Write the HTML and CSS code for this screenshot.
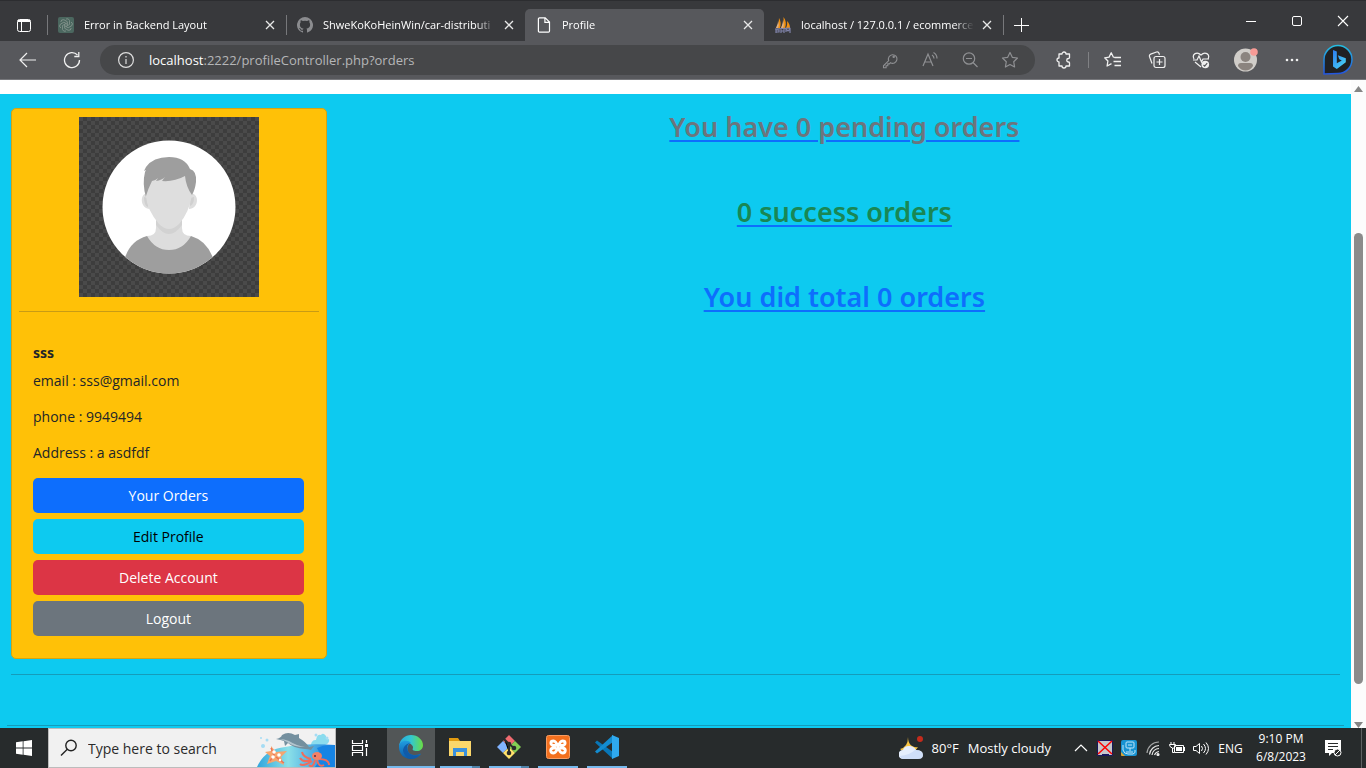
FILE: index.html
```html
<!DOCTYPE html>
<html lang="en">
<head>
<meta charset="utf-8">
<meta name="viewport" content="width=device-width, initial-scale=1">
<title>Profile</title>
<link rel="stylesheet" href="styles.css">
</head>
<body>
<svg class="defs" aria-hidden="true">
  <defs>
    <symbol id="x" viewBox="0 0 16 16"><path d="M4 4l8 8M12 4l-8 8" fill="none" stroke="#e8e8e8" stroke-width="1.3"/></symbol>
    <symbol id="github" viewBox="0 0 16 16"><path fill="#8b8c8f" d="M8 0a8 8 0 0 0-2.5 15.6c.4.1.5-.2.5-.4v-1.5c-2 .4-2.600-.5-2.800-1-.1-.2-.5-1-.8-1.200-.3-.2-.7-.5 0-.5s1.100.6 1.300.9c.7 1.200 1.900.9 2.300.7.1-.5.3-.9.500-1.100-1.800-.2-3.600-.9-3.600-4 0-.9.3-1.600.8-2.200-.1-.2-.4-1 .1-2.100 0 0 .7-.2 2.200.8a7.600 7.600 0 0 1 4 0c1.500-1 2.200-.8 2.200-.8.400 1.100.2 1.900.1 2.100.5.600.8 1.300.8 2.200 0 3.100-1.900 3.800-3.700 4 .3.300.6.7.6 1.500v2.200c0 .2.100.5.500.4A8 8 0 0 0 8 0z"/></symbol>
  </defs>
</svg>

<header class="browser">
  <div class="tabstrip">
    <button class="tab-actions" type="button" aria-label="Tab actions menu">
      <svg width="16" height="16" viewBox="0 0 16 16" fill="none" stroke="#fff"><rect x="1.500" y="2.500" width="13" height="12" rx="2"/><path d="M2 3.500h12M2 4.500h12M5.500 5v9"/></svg>
    </button>
    <div class="tab">
      <svg class="favicon" width="16" height="16" viewBox="0 0 16 16"><rect width="16" height="16" rx="2" fill="#4b675f"/><g fill="none" stroke="#87958f" stroke-width=".8"><path id="petal" d="M8 2a2.600 2.600 0 0 1 3.500 1.500v4L8 9.500"/><path d="M8 2a2.600 2.600 0 0 1 3.500 1.500v4L8 9.500" transform="rotate(60 8 8)"/><path d="M8 2a2.600 2.600 0 0 1 3.500 1.500v4L8 9.500" transform="rotate(120 8 8)"/><path d="M8 2a2.600 2.600 0 0 1 3.500 1.500v4L8 9.500" transform="rotate(180 8 8)"/><path d="M8 2a2.600 2.600 0 0 1 3.500 1.500v4L8 9.500" transform="rotate(240 8 8)"/><path d="M8 2a2.600 2.600 0 0 1 3.500 1.500v4L8 9.500" transform="rotate(300 8 8)"/></g></svg>
      <span class="tab-title">Error in Backend Layout</span>
      <button class="tab-close" type="button" aria-label="Close tab"><svg width="16" height="16"><use href="#x"/></svg></button>
    </div>
    <div class="tab">
      <svg class="favicon" width="16" height="16"><use href="#github"/></svg>
      <span class="tab-title">ShweKoKoHeinWin/car-distributi</span>
      <button class="tab-close" type="button" aria-label="Close tab"><svg width="16" height="16"><use href="#x"/></svg></button>
    </div>
    <div class="tab active">
      <svg class="favicon" width="16" height="16" viewBox="0 0 16 16" fill="none" stroke="#fff" stroke-width="1.200"><path d="M3.500.8h5.700l4.300 4.300v9a1.100 1.100 0 0 1-1.100 1.100H3.500a1.100 1.100 0 0 1-1.100-1.100V1.900A1.100 1.100 0 0 1 3.500.8zM8.900.8v4.500h4.500"/></svg>
      <span class="tab-title">Profile</span>
      <button class="tab-close" type="button" aria-label="Close tab"><svg width="16" height="16"><use href="#x"/></svg></button>
    </div>
    <div class="tab">
      <svg class="favicon" width="16" height="16" viewBox="0 0 16 16"><path fill="#f29111" d="M1 11C3 8 4 5 4 1c2 3 2 7 1 10zM6 11C8 7 9 4 8.500 0c2.500 3 3 7 1.500 11zM11 11c1-2 1.500-4 1-7 2 2 3 4 3 7z"/><path fill="#d9b089" d="M1 11c1-3 2-4 2-7 1 3 1 5 0 7zM6 11c1-3 2-5 2-8 1 3 1 6 0 8z"/><path fill="none" stroke="#7f82a8" stroke-width="1.200" d="M1 16v-3h3v2H1M6 16v-4M6 14h3m0-2v4M11 15v-3l2 2 2-2v4M0 12l15-1"/></svg>
      <span class="tab-title">localhost / 127.0.0.1 / ecommerce</span>
      <button class="tab-close" type="button" aria-label="Close tab"><svg width="16" height="16"><use href="#x"/></svg></button>
    </div>
    <button class="new-tab" type="button" aria-label="New tab"><svg width="16" height="16" viewBox="0 0 16 16" stroke="#fff"><path d="M8.500 1v14M1 8.500h15"/></svg></button>
    <div class="window-controls">
      <button type="button" aria-label="Minimize"><svg width="12" height="12" stroke="#fff"><path d="M1 6.500h10"/></svg></button>
      <button type="button" aria-label="Maximize"><svg width="12" height="12" fill="none" stroke="#fff"><rect x="1.500" y="1.500" width="9" height="9" rx="1.500"/></svg></button>
      <button type="button" aria-label="Close"><svg width="12" height="12" stroke="#fff" stroke-width="1.100"><path d="M1 1l10 10M11 1L1 11"/></svg></button>
    </div>
  </div>

  <div class="toolbar">
    <button class="tool" type="button" aria-label="Back"><svg width="18" height="18" viewBox="0 0 18 18" fill="none" stroke="#f0f0f0" stroke-width="1.200"><path d="M17 9H1.500M8 2L1 9l7 7"/></svg></button>
    <button class="tool" type="button" aria-label="Refresh"><svg width="18" height="18" viewBox="0 0 18 18" fill="none" stroke="#f0f0f0" stroke-width="1.300"><path d="M16.500 9A7.500 7.500 0 1 1 14.500 4M15.800 1v4.500h-4.500"/></svg></button>
    <div class="address">
      <svg width="18" height="18" viewBox="0 0 18 18" fill="none" stroke="#dedede" stroke-width="1.200"><circle cx="9" cy="9" r="7.400"/><path d="M9 8v5M9 5v1.500"/></svg>
      <a class="url" href="#"><b>localhost</b>:2222/profileController.php?orders</a>
      <div class="address-icons">
        <button type="button" aria-label="Saved passwords"><svg width="18" height="18" viewBox="0 0 18 18" fill="none" stroke="#8f9093" stroke-width="1.100"><path d="M7.700 9.600l-5.200 5.200v2h2.600v-2h1.700v-1.900h1.600l1.100-1.200a4.300 4.300 0 1 0-1.800-2.100z"/><circle cx="12.700" cy="5.700" r=".7"/></svg></button>
        <button type="button" aria-label="Read aloud"><svg width="18" height="18" viewBox="0 0 18 18" fill="none" stroke="#8f9093" stroke-width="1.200"><path d="M2 15L7 3l5 12M3.800 11h6.400M11 4q2 1.300 2 3.500M12.500 1.500q3.500 2 3.500 6"/></svg></button>
        <button type="button" aria-label="Zoom"><svg width="18" height="18" viewBox="0 0 18 18" fill="none" stroke="#8f9093" stroke-width="1.200"><circle cx="8" cy="7.500" r="5.700"/><path d="M5 7.500h6M12 11.500l4.500 4.500"/></svg></button>
        <button type="button" aria-label="Add to favorites"><svg width="18" height="18" viewBox="0 0 18 18" fill="none" stroke="#8f9093" stroke-width="1.200" stroke-linejoin="round"><path d="M9 1.500l2.300 4.800 5.200.7-3.800 3.700.9 5.300L9 13.500 4.400 16l.9-5.300L1.500 7l5.200-.7z"/></svg></button>
      </div>
    </div>
    <button class="tool" type="button" aria-label="Extensions"><svg width="18" height="18" viewBox="0 0 18 18" fill="none" stroke="#f0f0f0" stroke-width="1.300" stroke-linejoin="round"><path d="M4 3h3a2 2 0 0 1 4 0h3.500v3.800a1 1 0 0 1-1 .7 1.700 1.700 0 0 0 0 3.500 1 1 0 0 1 1 .8V15H11a2 2 0 0 1-4 0H4v-4a2 2 0 0 1 0-4z"/></svg></button>
    <span class="divider"></span>
    <button class="tool" type="button" aria-label="Favorites"><svg width="18" height="18" viewBox="0 0 18 18" fill="none" stroke="#f0f0f0" stroke-width="1.300" stroke-linejoin="round"><path d="M10.500 6.500L9.300 6 7.200 1.800 5.100 6.100l-4.400.7 3.200 3.200-.8 5L7.500 12.700M10.500 6.500H17M9.500 10.500H17M10.500 14.500H17"/></svg></button>
    <button class="tool" type="button" aria-label="Collections"><svg width="18" height="18" viewBox="0 0 18 18" fill="none" stroke="#f0f0f0" stroke-width="1.200"><rect x="6" y="5.500" width="11" height="11" rx="2"/><path d="M11.500 8v6M8.500 11h6M4 12.500l-2.500-7a2 2 0 0 1 1.200-2.400L8.500 1a2 2 0 0 1 2.500 1.200l.5 1.500"/></svg></button>
    <button class="tool" type="button" aria-label="Browser essentials"><svg width="18" height="18" viewBox="0 0 18 18" fill="none" stroke="#f0f0f0" stroke-width="1.200"><path d="M2 8C-.5 3 5 0 9 4c4-4 9.500-1 7 4M1 9h4l2-4 2.500 6L11 8h6M3 11l6 5"/><circle cx="13.300" cy="13.500" r="3.800" fill="#f0f0f0" stroke="none"/><path stroke="#57585c" d="M11.500 14l1.200 1.200 2.500-3"/></svg></button>
    <button class="tool wide" type="button" aria-label="Account"><svg width="24" height="26" viewBox="0 0 24 26"><circle cx="11.500" cy="13" r="11.500" fill="#d0cdc9"/><circle cx="11.500" cy="10" r="5" fill="#8b847f"/><path fill="#8b847f" d="M4 19q0-3 3-3h9q3 0 3 3-3 4.500-7.500 4.500T4 19z"/><circle cx="20" cy="5" r="3.800" fill="#f79b96"/></svg></button>
    <button class="tool wide" type="button" aria-label="Settings and more"><svg width="18" height="18" fill="#f0f0f0"><circle cx="4" cy="9" r="1.300"/><circle cx="9" cy="9" r="1.300"/><circle cx="14" cy="9" r="1.300"/></svg></button>
    <button class="tool wide" type="button" aria-label="Bing chat"><svg width="30" height="32" viewBox="0 0 30 32"><defs><linearGradient id="ring" x2="0" y2="1"><stop stop-color="#24bde0"/><stop offset="1" stop-color="#2355df"/></linearGradient><linearGradient id="b" x2="1" y2="1"><stop stop-color="#2d7cf3"/><stop offset="1" stop-color="#4bdcf5"/></linearGradient></defs><path d="M1 30V15.500A14 14 0 1 1 15 29.500z" fill="#202124" stroke="url(#ring)" stroke-width="1.500"/><path fill="url(#b)" d="M10 6l3.800 1.500v11.800l5-2.800-2.500-1.300-1.500-4 8 3v4L13.800 25 10 22.500z"/></svg></button>
  </div>
</header>

<div class="viewport">
  <main class="page">
    <div class="row">
      <aside class="sidebar">
        <section class="card">
          <svg class="avatar" width="180" height="180" viewBox="0 0 180 180" role="img" aria-label="Profile picture">
            <defs>
              <pattern id="checks" width="8" height="8" patternUnits="userSpaceOnUse"><rect width="8" height="8" fill="#3d3d3d"/><path d="M0 0h4v4H0zM4 4h4v4H4z" fill="#4a4a4a"/></pattern>
              <clipPath id="disc"><circle cx="90" cy="90" r="66.500"/></clipPath>
            </defs>
            <rect width="180" height="180" fill="url(#checks)"/>
            <g clip-path="url(#disc)">
              <rect width="180" height="180" fill="#fff"/>
              <path fill="#9e9e9e" d="M45 144q5-20 23-25h44q17 5 23 25v14H45z"/>
              <path fill="#dddddd" d="M77 98h26v13q0 8 9 8-8 14-22 14t-22-14q9 0 9-8z"/>
              <path fill="#d2d2d2" d="M77 103q13 14 26 0v5q-13 18-26 0z"/>
              <path fill="#dedede" d="M69 76c-9 0-8 16 2 16zM111 76c10 0 9 16-1 16z"/>
              <path fill="#d0d0d0" d="M65 80l4 1v9q-4-1-4-10zM115 80l-4 1v8q4-1 4-9z"/>
              <path fill="#dedede" d="M67 58q23-18 46 0v20q-3 18-13 29-10 10-20 0-12-14-13-28z"/>
              <path fill="#9e9e9e" d="M67 80q-4-13-1-25l1-2-2 1 2-4q7-10 23-10 16 0 21 12 7 2 6 13-1 8-4 13-6-8-7-19-11 6-23 5l3-4q-3 3-9 4l2-3q-3 3-6 3-4 8-6 15z"/>
            </g>
          </svg>
          <hr class="card-rule">
          <div class="card-body">
            <h1 class="name">sss</h1>
            <p>email : sss@gmail.com</p>
            <p>phone : 9949494</p>
            <p>Address : a asdfdf</p>
            <div class="actions">
              <button class="btn primary" type="button">Your Orders</button>
              <button class="btn info" type="button">Edit Profile</button>
              <button class="btn danger" type="button">Delete Account</button>
              <button class="btn secondary" type="button">Logout</button>
            </div>
          </div>
        </section>
      </aside>
      <section class="orders">
        <a href="#"><h2 class="pending">You have 0 pending orders</h2></a>
        <a href="#"><h2 class="success">0 success orders</h2></a>
        <a href="#"><h2 class="total">You did total 0 orders</h2></a>
      </section>
    </div>
    <hr class="rule">
    <hr class="rule footer-rule">
  </main>
  <div class="scrollbar" aria-hidden="true">
    <svg width="9" height="6" fill="#858585"><path d="M4.500 0L9 6H0z"/></svg>
    <div class="track"><div class="thumb"></div></div>
    <svg width="9" height="6" fill="#858585"><path d="M4.500 6L9 0H0z"/></svg>
  </div>
</div>

<footer class="taskbar">
  <button class="start" type="button" aria-label="Start"><svg width="16" height="16" fill="#fff"><path d="M0 2.300l6.700-1v6.200H0zM7.500 1.200L16 0v7.500H7.500zM0 8.400h6.700v6.300L0 13.700zM7.500 8.400H16V16l-8.500-1.200z"/></svg></button>
  <label class="search">
    <svg width="18" height="18" viewBox="0 0 18 18" fill="none" stroke="#222" stroke-width="1.400"><circle cx="11" cy="6.500" r="5.200"/><path d="M7.300 10.300L1 16.600"/></svg>
    <input type="text" placeholder="Type here to search" aria-label="Type here to search">
    <svg class="sea" width="78" height="38" viewBox="0 0 78 38">
      <defs><linearGradient id="water" x2="1"><stop stop-color="#2fa5dd"/><stop offset=".4" stop-color="#8be0e8"/><stop offset="1" stop-color="#167fe0"/></linearGradient></defs>
      <path fill="#8adcee" d="M53 20q1-10 6-9 1-6 5-5 2-3 5 1 0 4 3 3 1 4-4 6v4z"/>
      <path fill="url(#water)" d="M0 38Q8 20 28 18q20-4 50-2v22z"/>
      <path fill="#1684e4" d="M60 19q8-4 18-2v21H58q8-10 2-19z"/>
      <path fill="#74909f" d="M19 10q5-1 6-4 6-4 13 0l4-1v4q7 4 10 9l5-1-3 4q-3-1-6-1-12-1-17-6l-3 3-1-5q-3-1-8-2z"/>
      <path fill="#b4c5ce" d="M22 10q5 0 10 2 8 5 16 6-12 0-18-5-3-2-8-3z"/>
      <path fill="#f6a56e" d="M14 17l5 6 11-1-6 6 3 8-8-4-9 3 3-8-5-4 6-1z"/>
      <path fill="none" stroke="#ed7254" stroke-width="1.500" d="M14 19l3 7-4 6M19 28l8 6"/>
      <g fill="#fff"><circle cx="17" cy="23" r="1.800"/><circle cx="22" cy="26" r="1.800"/><circle cx="16" cy="28" r="1.800"/><circle cx="23" cy="31" r="1.200"/></g>
      <path fill="none" stroke="#ef6c5c" stroke-width="2" d="M54 31q-8 3-11-2M55 32q-9 6-12 3M58 31q-2 9-6 5M60 31q2 8 7 5M62 30q10 0 10 6M54 30q-8-2-9-7"/>
      <ellipse cx="60" cy="27" rx="5" ry="4" fill="#f58066"/><circle cx="58" cy="27" r="1" fill="#5c2940"/>
      <g fill="#a5dcf4"><circle cx="6" cy="17" r="2"/><circle cx="10" cy="11" r="1.500"/><circle cx="4" cy="9" r="1"/><circle cx="59" cy="6" r="1.500"/><circle cx="70" cy="9" r="1.500"/></g>
    </svg>
  </label>
  <button class="task-view" type="button" aria-label="Task view"><svg width="17" height="16" fill="none" stroke="#fff" stroke-width="1.200"><path d="M1.500 0v3.500h10V0M1.500 16v-3.500h10V16M1.500 5.500h10v5h-10zM15.500 0v3M15.500 8v8"/><path fill="#fff" stroke="none" d="M14 4h3v3h-3z"/></svg></button>
  <nav class="apps">
    <button class="app active" type="button" aria-label="Microsoft Edge"><svg width="24" height="24" viewBox="0 0 24 24"><defs><linearGradient id="eg" x2="1"><stop stop-color="#27a9df"/><stop offset=".5" stop-color="#32c7d1"/><stop offset="1" stop-color="#6bdd43"/></linearGradient><linearGradient id="eb" y2="1" x2="0"><stop stop-color="#209ee0"/><stop offset="1" stop-color="#0b59a8"/></linearGradient></defs><path fill="url(#eg)" d="M0 11C1 4 6 0 12 0c7 0 12 5 12 10 0 4-3 6-6 6-4 0-5-1-4-3C15 9 5 4 0 11z"/><path fill="url(#eb)" d="M0 12c0-7 9-8 12-4-6 2-4 13 4 12 3 0 5-2 6-1-2 3-6 5-10 5C5 24 0 19 0 12z"/><path fill="#105ba9" d="M8 12c0 7 6 10 12 8-3 5-14 5-16-4 0-3 2-7 7-8-2 1-3 3-3 4z"/></svg></button>
    <button class="app grouped" type="button" aria-label="File Explorer"><svg width="24" height="24" viewBox="0 0 24 24"><path fill="#e29b10" d="M1 3h9l2 3h11v4H1z"/><path fill="#fbd76b" d="M1 6h22v15H1z"/><path fill="#3b91dc" d="M5 13h14v8h-3v-4H8v4H5z"/></svg></button>
    <button class="app grouped" type="button" aria-label="Git Bash"><svg width="24" height="24" viewBox="0 0 24 24"><path fill="#ef6b70" d="M12 0l6 6-6 6-6-6z"/><path fill="#80b3ff" d="M6 6l6 6-6 6-6-6z"/><path fill="#83cf55" d="M18 6l6 6-6 6-6-6z"/><path fill="#ffe16b" d="M12 12l6 6-6 6-6-6z"/><path stroke="#292b2b" stroke-width="2" d="M7 4l5 5v9M12 9l5 4"/><g fill="#292b2b"><circle cx="12" cy="9" r="2.300"/><circle cx="12" cy="18" r="2.300"/><circle cx="17" cy="13" r="2.300"/></g></svg></button>
    <button class="app" type="button" aria-label="XAMPP"><svg width="24" height="24" viewBox="0 0 24 24"><rect x=".5" y=".5" width="23" height="23" rx="2" fill="#f3701e" stroke="#f69c62"/><path fill="none" stroke="#fff" stroke-width="2.800" stroke-linecap="round" stroke-linejoin="round" d="M9 10.500H7.500C4 10 4 6 7.500 6 10 6 11 9 12 12c1 3 2 6 4.500 6 3.500 0 4-4.500 0-5H15M15 10.500h1.500c3.500-.5 3.500-4.500 0-4.500C14 6 13 9 12 12c-1 3-2 6-4.500 6-3.500 0-4-4.500 0-5H9"/></svg></button>
    <button class="app" type="button" aria-label="Visual Studio Code"><svg width="24" height="24" viewBox="0 0 24 24"><path fill="#0877b8" d="M18 17L2 5.500 0 7.500 18 24z"/><path fill="#138cd0" d="M18 7L2 18.500l-2-2L18 0z"/><path fill="#2fa9ef" d="M17 0l7 3v18l-7 3z"/></svg></button>
  </nav>
  <div class="tray">
    <button class="weather" type="button"><svg width="24" height="24" viewBox="0 0 24 24"><path fill="#fbc642" d="M9 1c0 8 5 11 10 10-4 7-12 7-18 2q8-2 8-12z"/><path fill="#e5eefd" d="M4 23a4.500 4.500 0 0 1 0-9q1-4 6-4t7 4q7 0 7 5 0 4-5 4z"/><path fill="#b9cef4" d="M1 20q10-1 15-6 7 0 8 5 0 4-5 4H4q-2 0-3-3z" opacity=".5"/><circle cx="21" cy="3" r="3" fill="#c42b1c"/></svg><span>80°F</span><span>Mostly cloudy</span></button>
    <button class="tray-icon" type="button" aria-label="Show hidden icons"><svg width="16" height="16" fill="none" stroke="#fff" stroke-width="1.200"><path d="M2 11l6-6 6 6"/></svg></button>
    <button class="tray-icon" type="button" aria-label="Display"><svg width="16" height="16"><path fill="#c6c6cb" stroke="#17175d" d="M.5.5h15v15H.5z"/><path fill="#17175d" d="M5 14h7v2H5z"/><path stroke="#f00" stroke-width="1.500" d="M1 1l14 13M15 1L1 14"/></svg></button>
    <button class="tray-icon" type="button" aria-label="Graphics settings"><svg width="16" height="16"><rect width="16" height="16" rx="2" fill="#1792d1"/><rect x="5" y="2" width="8" height="6" rx="1" fill="none" stroke="#c1e6f9"/><path fill="none" stroke="#c1e6f9" d="M7 5h4M9 8v3M2 5v5q1 4 5 4h5q3-1 2-4M5 12h7"/><path fill="#dba532" d="M0 12l4 4H1a1 1 0 0 1-1-1z"/></svg></button>
    <button class="tray-icon" type="button" aria-label="Network"><svg width="16" height="16" fill="none" stroke="#e8e8e8" stroke-width="1.200"><path opacity=".65" d="M2 13A12 12 0 0 1 14 2"/><path d="M4.500 14.500A10 10 0 0 1 14 5.500M7 15a7.500 7.500 0 0 1 7-6.500M9.500 15q1-3 4.500-3.500"/><circle cx="13" cy="14.500" r="1" fill="#fff"/></svg></button>
    <button class="tray-icon" type="button" aria-label="Battery"><svg width="16" height="16" fill="none" stroke="#fff"><path d="M5.500 5.500h9v7h-9zM2 2v3M5 2v3M.5 4.500h6v2l-2.500 2-3-2zM3.500 8v4.500h2M15.500 7v4"/><path fill="#fff" stroke="none" d="M7 7h6v4H7z"/></svg></button>
    <button class="tray-icon" type="button" aria-label="Volume"><svg width="16" height="16" fill="none" stroke="#fff"><path d="M.5 6.500H3l3.500-3v10L3 10.500H.5zM8.500 6q2 2.500 0 5M10.500 4q4 4.500 0 9M13 2.500q5 6 0 12"/></svg></button>
    <button class="lang" type="button">ENG</button>
    <button class="clock" type="button"><span>9:10 PM</span><span>6/8/2023</span></button>
    <button class="notify" type="button" aria-label="Notifications"><svg width="18" height="18"><path fill="#fff" d="M1 1h16v10.500h-2L11 14H8l-3 3v-3H1z"/><path stroke="#292b2b" d="M4 4.500h10M4 7.500h10M4 10.500h5"/><circle cx="13.500" cy="13.500" r="3.500" fill="#292b2b" stroke="#fff"/><path stroke="#fff" d="M11 16l5-5"/></svg></button>
    <span class="show-desktop"></span>
  </div>
</footer>
</body>
</html>
```
FILE: styles.css
```css
* { box-sizing: border-box; }
body {
  margin: 0;
  height: 100vh;
  display: flex;
  flex-direction: column;
  overflow: hidden;
  font-family: "Noto Sans", "Open Sans", sans-serif;
  background: #fff;
}
button {
  display: flex;
  align-items: center;
  justify-content: center;
  padding: 0;
  border: 0;
  background: none;
  color: inherit;
  font: inherit;
  flex: none;
}
svg { display: block; flex: none; }
.defs { position: absolute; width: 0; height: 0; }

/* Browser chrome */
.browser { flex: none; color: #fff; font-family: "Open Sans", sans-serif; }
.tabstrip {
  display: flex;
  height: 41px;
  padding-top: 8px;
  background: #38393c;
  border-top: 1px solid #2c2d30;
}
.tab-actions { width: 47px; }
.tab {
  display: flex;
  align-items: center;
  gap: 10px;
  flex: 0 1 239px;
  min-width: 0;
  padding: 0 8px 0 11px;
  position: relative;
}
.tab:not(.active)::before,
.new-tab::before {
  content: "";
  position: absolute;
  left: 0;
  top: 6px;
  height: 20px;
  width: 1px;
  background: #77787b;
}
.tab.active { background: #57585c; border-radius: 5px 5px 0 0; }
.tab.active + .tab::before { display: none; }
.tab-title {
  flex: 1;
  min-width: 0;
  overflow: hidden;
  white-space: nowrap;
  font-size: 11px;
  line-height: 16px;
  mask-image: linear-gradient(to right, #000 calc(100% - 20px), transparent);
}
.tab-close { width: 16px; height: 16px; margin-left: -5px; }
.new-tab { width: 36px; position: relative; }
.window-controls { display: flex; margin-left: auto; margin-top: -8px; }
.window-controls button { width: 46px; }

.toolbar {
  display: flex;
  align-items: center;
  height: 39px;
  padding: 0 5px 0 6px;
  background: #57585c;
  border-bottom: 1px solid #77787c;
}
.tool { width: 44px; height: 34px; }
.tool.wide { width: 46px; }
.divider { width: 1px; height: 16px; margin: 0 2px; background: #808184; }
.address {
  display: flex;
  align-items: center;
  flex: 1;
  min-width: 0;
  height: 30px;
  margin: 0 7px 0 6px;
  padding: 0 5px 0 17px;
  gap: 14px;
  border-radius: 15px;
  background: #464749;
}
.url { flex: 1; min-width: 0; color: #b5b6b8; text-decoration: none; font-size: 13px; white-space: nowrap; }
.url b { color: #fff; font-weight: 400; }
.address-icons { display: flex; }
.address-icons button { width: 40px; height: 30px; }

/* Page */
.viewport { flex: 1; min-height: 0; display: flex; }
.page { flex: 1; min-width: 0; margin-top: 14px; padding-top: 14px; background: #0dcaf0; overflow: hidden; }
.row { display: flex; align-items: flex-start; }
.sidebar { flex: 0 0 25%; padding: 0 11px; }
.card {
  padding: 8px 7px;
  border: 1px solid #d7a410;
  border-radius: 5px;
  background: #ffc107;
  color: #212529;
  font-size: 14px;
}
.avatar { margin: 0 auto; }
.card-rule { margin: 14px 0; border: 0; border-top: 1px solid #c89b15; }
.card-body { padding: 14px 15px 14px 14px; }
.name { margin: 0 0 7px; padding-top: 3px; font-size: 14px; line-height: 20px; font-weight: 700; }
.card-body p { margin: 0 0 14px; line-height: 22px; font-family: "Open Sans", sans-serif; }
.actions { display: grid; gap: 6px; }
.btn { height: 35px; border-radius: 5px; color: #fff; font-family: "Open Sans", sans-serif; font-size: 14px; }
.primary { background: #0d6efd; }
.info { background: #0dcaf0; color: #000; }
.danger { background: #dc3545; }
.secondary { background: #6c757d; }
.orders { flex: 1; display: flex; flex-direction: column; align-items: center; gap: 48px; }
.orders a { color: #0d6efd; text-decoration: underline; text-decoration-thickness: 2px; text-underline-offset: 3px; }
.orders h2 { margin: 0; font-size: 27px; line-height: 37px; font-weight: 600; }
.pending { color: #6c757d; }
.success { color: #198754; }
.total { color: #0d6efd; }
.rule { margin: 15px 11px 50px; border: 0; border-top: 1px solid #159cba; }
.footer-rule { margin: 0 7px; }

.scrollbar {
  width: 15px;
  display: flex;
  flex-direction: column;
  align-items: center;
  padding-top: 6px;
  background: #fcfcfc;
}
.track { flex: 1; display: grid; grid-template-rows: 141fr 451fr 38fr; }
.thumb { grid-row: 2; width: 9px; border-radius: 5px; background: #8b8b8b; }

/* Taskbar */
.taskbar { flex: none; display: flex; height: 40px; background: #272b2c; color: #fff; }
.start { width: 48px; }
.task-view { width: 47px; }
.search {
  display: flex;
  align-items: center;
  flex: 0 1 288px;
  min-width: 0;
  padding-left: 11px;
  gap: 10px;
  border: 1px solid #bcbcbc;
  background: #f1f1f1;
}
.search input { flex: 1; min-width: 0; padding: 0; border: 0; background: none; font-family: "Open Sans", sans-serif; font-size: 14px; }
.search input::placeholder { color: #2b2b2b; opacity: 1; }
.apps { display: flex; gap: 9px; padding-left: 4px; }
.app { width: 40px; border-bottom: 2px solid #76b9ed; }
.app.active { width: 48px; background: #525657; margin-right: -4px; }
.app.grouped { border-image: linear-gradient(to right, #76b9ed 31px, #4f82a8 31px) 2; }
.tray { display: flex; align-items: center; margin-left: auto; padding-right: 4px; font-family: "Open Sans", sans-serif; }
.weather { gap: 9px; margin-right: 18px; font-size: 13px; }
.tray-icon { width: 24px; height: 40px; }
.lang { width: 35px; font-size: 12px; }
.clock { flex-direction: column; width: 66px; font-size: 12px; line-height: 18px; }
.notify { width: 38px; height: 40px; margin-right: 9px; }
.show-desktop { width: 1px; height: 40px; background: #5d6162; }
```
